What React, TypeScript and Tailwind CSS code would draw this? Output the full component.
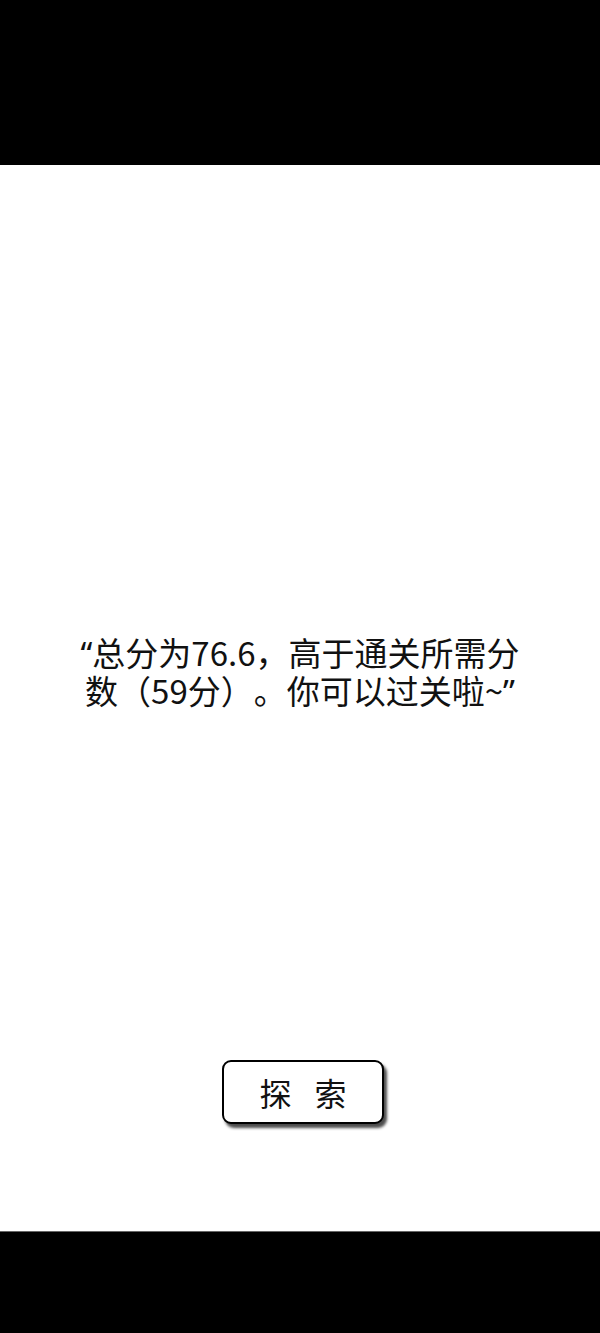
export default function App() {
  return (
    <div
      className="flex h-[1333px] w-[600px] flex-col bg-black"
      style={{ fontFamily: '"Noto Sans CJK SC", "Noto Sans", sans-serif' }}
    >
      {/* top bar */}
      <div className="h-[165px] shrink-0 bg-black" />

      {/* content */}
      <div className="flex flex-1 flex-col items-center bg-white">
        <p className="mt-[469px] w-[462px] text-center text-[33px] leading-[37px] text-[#111] [text-spacing-trim:space-all]">
          <span className="font-['Noto_Sans']">“</span>总分为76.6，高于通关所需分数（59分）。你可以过关啦~
          <span className="font-['Noto_Sans']">”</span>
        </p>

        <button className="ml-[6px] mt-[350px] flex h-[64px] w-[162px] items-center justify-center rounded-[9px] border-[2.5px] border-black bg-white text-[32px] text-[#111] shadow-[3px_4px_3px_rgba(0,0,0,0.7)] [text-spacing-trim:space-all]">
          <span>探</span>
          <span className="ml-[23px]">索</span>
        </button>
      </div>

      {/* bottom bar */}
      <div className="h-[102px] shrink-0 border-t border-[#666] bg-black" />
    </div>
  );
}
